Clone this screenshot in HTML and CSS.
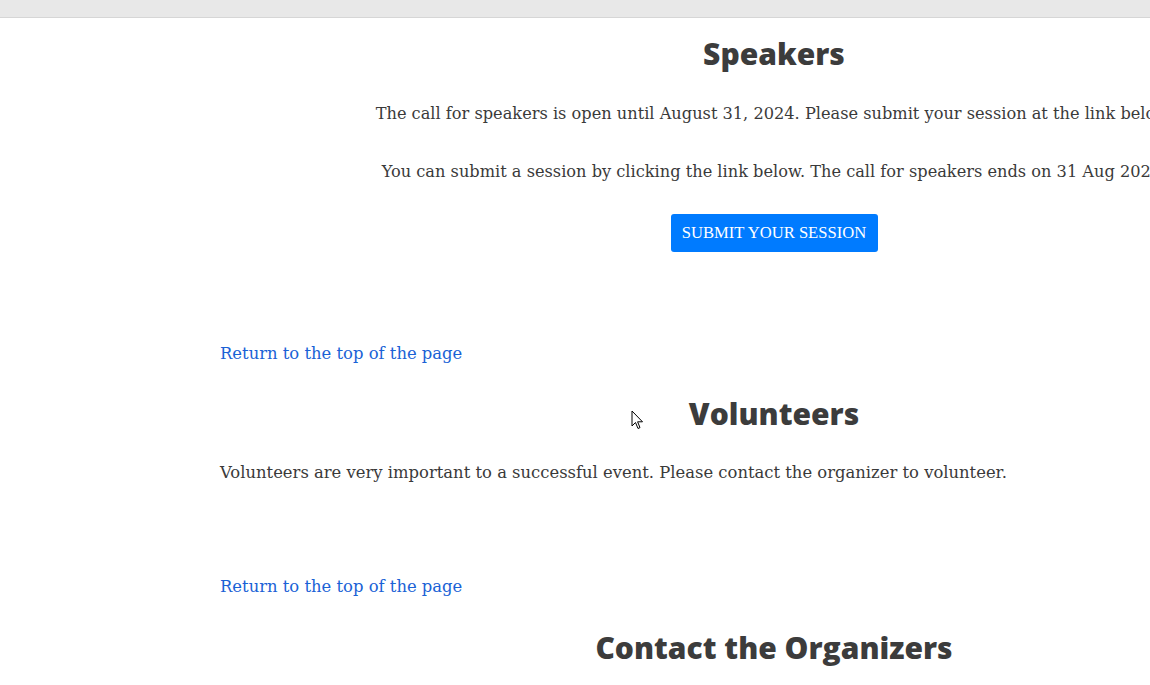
FILE: index.html
```html
<!DOCTYPE html>
<html lang="en">
<head>
<meta charset="utf-8">
<title>Speakers</title>
<link rel="stylesheet" href="styles.css">
</head>
<body>
<div class="topbar"></div>
<main class="content">
  <section class="section">
    <h2 class="heading">Speakers</h2>
    <p class="center">The call for speakers is open until August 31, 2024. Please submit your session at the link below.</p>
    <p class="center">You can submit a session by clicking the link below. The call for speakers ends on 31 Aug 2024.</p>
    <div class="btn-row"><a class="btn" href="#">SUBMIT YOUR SESSION</a></div>
  </section>
  <a class="toplink" href="#">Return to the top of the page</a>
  <section class="section">
    <h2 class="heading">Volunteers</h2>
    <p class="left">Volunteers are very important to a successful event. Please contact the organizer to volunteer.</p>
  </section>
  <a class="toplink second" href="#">Return to the top of the page</a>
  <section class="section">
    <h2 class="heading">Contact the Organizers</h2>
  </section>
</main>
<svg class="cursor" width="13" height="21" viewBox="0 0 13 21"><path d="M1 1 L1 16 L4.5 12.5 L7 18.5 L9 17.6 L6.6 11.8 L11.5 11.8 Z" fill="#fff" stroke="#000" stroke-width="1" stroke-linejoin="round"/></svg>
</body>
</html>
```
FILE: styles.css
```css
html, body {
  margin: 0;
  padding: 0;
  background: #fff;
  overflow: hidden;
}
body {
  width: 1150px;
  height: 685px;
  position: relative;
  font-family: "DejaVu Serif", "Liberation Serif", serif;
  color: #3a3a3a;
}
.topbar {
  height: 17px;
  background: #e8e8e8;
  border-bottom: 1px solid #d6d6d6;
}
.content {
  width: 1108px;
  margin-left: 220px;
  display: flex;
  flex-direction: column;
}
.section {
  display: flex;
  flex-direction: column;
}
.heading {
  font-family: "Open Sans", "Noto Sans", sans-serif;
  font-weight: 800;
  font-size: 30px;
  line-height: 40px;
  color: #3c3c3c;
  text-align: center;
  margin: 0;
}
.section:first-child .heading { margin-top: 16px; }
.center {
  text-align: center;
  font-size: 16.2px;
  line-height: 28px;
  margin: 26px 0 0;
  white-space: nowrap;
}
.center + .center { margin-top: 30px; }
.left {
  font-size: 16.4px;
  line-height: 28px;
  margin: 25px 0 0;
}
.btn-row {
  display: flex;
  justify-content: center;
  margin-top: 28px;
}
.btn {
  display: block;
  background: #007bff;
  color: #fff;
  text-decoration: none;
  font-family: "Liberation Serif", serif;
  font-size: 16.6px;
  line-height: 38px;
  height: 38px;
  width: 207px;
  text-align: center;
  border-radius: 3px;
}
.toplink {
  align-self: flex-start;
  color: #1a62d6;
  text-decoration: none;
  font-size: 16.4px;
  line-height: 28px;
  margin-top: 88px;
  margin-bottom: 26px;
}
.toplink.second { margin-top: 86px; margin-bottom: 27px; }
.cursor {
  position: absolute;
  left: 631px;
  top: 410px;
}
```
